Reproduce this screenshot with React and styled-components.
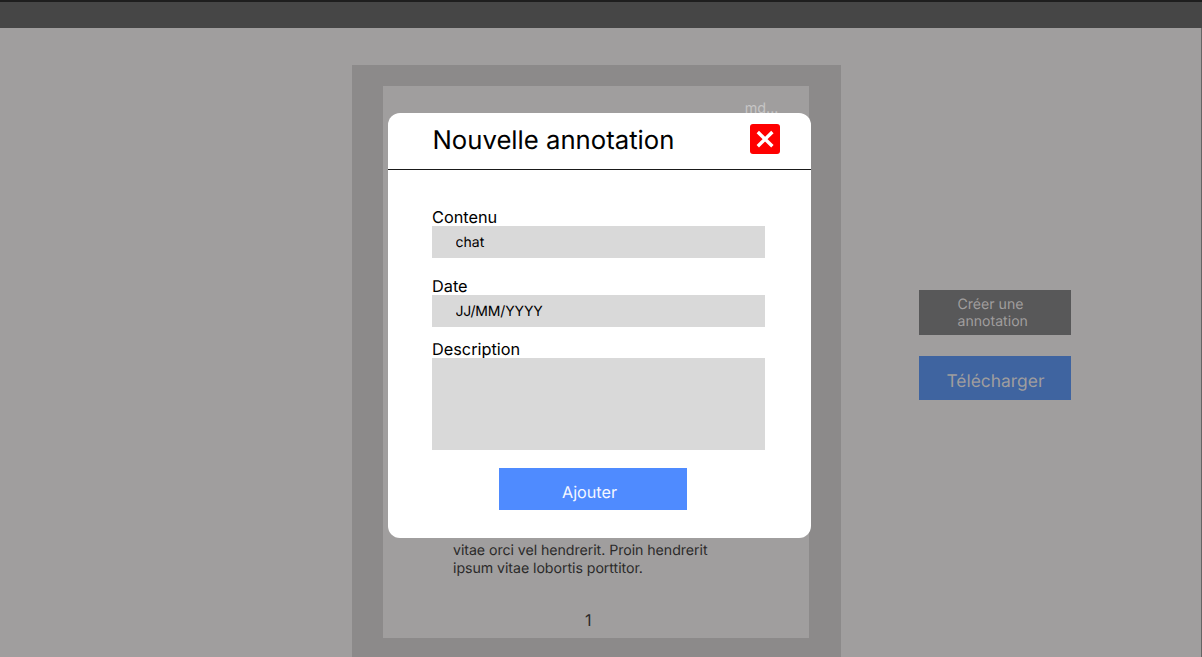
import React from "react";
import styled, { createGlobalStyle } from "styled-components";

const GlobalStyle = createGlobalStyle`
  * { box-sizing: border-box; }
  body {
    margin: 0;
    overflow: hidden;
    background: #a09e9e;
    font-family: Inter, sans-serif;
    text-rendering: geometricPrecision;
  }
  button, input, textarea {
    font-family: inherit;
    text-rendering: inherit;
    border: 0;
    border-radius: 0;
    outline: 0;
    margin: 0;
  }
`;

const Screen = styled.div`
  position: relative;
  height: 657px;
  display: flex;
  flex-direction: column;
  overflow: hidden;
`;

const TopBar = styled.header`
  flex: none;
  height: 28px;
  background: #464646;
  border-top: 2px solid #1e1e1e;
`;

const Workspace = styled.main`
  flex: 1;
  display: flex;
  align-items: flex-start;
  padding: 37px 0 0 352px;
  border-right: 1px solid #666565;
`;

const Viewer = styled.section`
  flex: none;
  width: 489px;
  height: 620px;
  padding: 21px 31px;
  background: #8c8a8a;
`;

const Page = styled.article`
  width: 426px;
  height: 552px;
  padding: 14px 30.5px 0 70px;
  display: flex;
  flex-direction: column;
  background: #a09e9e;
  color: #2b2a2a;
`;

const Author = styled.span`
  align-self: flex-end;
  font-size: 14.4px;
  line-height: 18px;
  color: #c6c5c5;
`;

const Paragraph = styled.p`
  margin: 424px 0 0;
  font-size: 14.2px;
  line-height: 17.5px;
  letter-spacing: -0.06px;
  white-space: pre-line;
`;

const PageNumber = styled.span`
  margin: 33px 0 0 132px;
  font-size: 16px;
  line-height: 20px;
`;

const Actions = styled.aside`
  flex: none;
  display: flex;
  flex-direction: column;
  gap: 21px;
  margin: 225px 0 0 78px;
`;

const ActionButton = styled.button`
  width: 152px;
  height: ${(p) => p.$height};
  padding: ${(p) => p.$padding};
  text-align: left;
  white-space: pre-line;
  color: #a09e9e;
  background: ${(p) => p.$background};
  font-size: ${(p) => p.$size};
  line-height: 17.5px;
`;

const Modal = styled.div`
  position: absolute;
  left: 388px;
  top: 113px;
  width: 422.5px;
  height: 425px;
  border-radius: 12px;
  background: #fff;
  color: #000;
  overflow: hidden;
`;

const ModalHeader = styled.div`
  display: flex;
  align-items: flex-start;
  justify-content: space-between;
  height: 57px;
  padding: 11px 30.5px 0 44.5px;
  border-bottom: 1px solid #1a1a1a;
`;

const Title = styled.h1`
  margin: 0;
  font-size: 25.7px;
  line-height: 33px;
  font-weight: 400;
  font-optical-sizing: none;
`;

const CloseButton = styled.button`
  display: block;
  width: 30px;
  height: 30px;
  padding: 0;
  border-radius: 3px !important;
  background: #f00;
  svg { display: block; }
`;

const Form = styled.div`
  display: flex;
  flex-direction: column;
  padding: 37px 45.5px 0 44px;
`;

const Field = styled.label`
  display: flex;
  flex-direction: column;
  margin-bottom: ${(p) => p.$gap};
`;

const Label = styled.span`
  height: 19px;
  font-size: 16.3px;
  line-height: 20px;
`;

const Input = styled.input`
  width: 333px;
  height: 32px;
  padding: 1px 24px 0 23.5px;
  background: #d9d9d9;
  color: #000;
  font-size: 14px;
  letter-spacing: ${(p) => p.$tracking || "normal"};
  &::placeholder { color: #000; opacity: 1; }
`;

const TextArea = styled.textarea`
  display: block;
  width: 333px;
  height: 92px;
  padding: 8px 24px;
  resize: none;
  background: #d9d9d9;
`;

const SubmitButton = styled.button`
  width: 188px;
  height: 42px;
  margin-left: 67px;
  padding: 6px 7px 0 0;
  background: #4f8bff;
  color: #f4f7ff;
  font-size: 16.2px;
`;

export default function App() {
  return (
    <Screen>
      <GlobalStyle />
      <TopBar />
      <Workspace>
        <Viewer>
          <Page>
            <Author>md...</Author>
            <Paragraph>{"vitae orci vel hendrerit. Proin hendrerit\nipsum vitae lobortis porttitor."}</Paragraph>
            <PageNumber>1</PageNumber>
          </Page>
        </Viewer>
        <Actions>
          <ActionButton $background="#585859" $height="45px" $size="14.1px" $padding="1px 0 0 38.5px">
            {"Créer une\nannotation"}
          </ActionButton>
          <ActionButton $background="#3f64a0" $height="44px" $size="17.4px" $padding="8px 0 0 27.5px">
            Télécharger
          </ActionButton>
        </Actions>
      </Workspace>
      <Modal>
        <ModalHeader>
          <Title>Nouvelle annotation</Title>
          <CloseButton aria-label="Fermer">
            <svg width="30" height="30" viewBox="0 0 30 30" fill="none" stroke="#fff" strokeWidth="3.4">
              <path d="M7.8 8 L22.4 22.2 M22.4 8 L7.8 22.2" />
            </svg>
          </CloseButton>
        </ModalHeader>
        <Form>
          <Field $gap="18px">
            <Label>Contenu</Label>
            <Input defaultValue="chat" />
          </Field>
          <Field $gap="12px">
            <Label>Date</Label>
            <Input placeholder="JJ/MM/YYYY" $tracking="-0.15px" />
          </Field>
          <Field $gap="18px">
            <Label>Description</Label>
            <TextArea />
          </Field>
          <SubmitButton>Ajouter</SubmitButton>
        </Form>
      </Modal>
    </Screen>
  );
}
